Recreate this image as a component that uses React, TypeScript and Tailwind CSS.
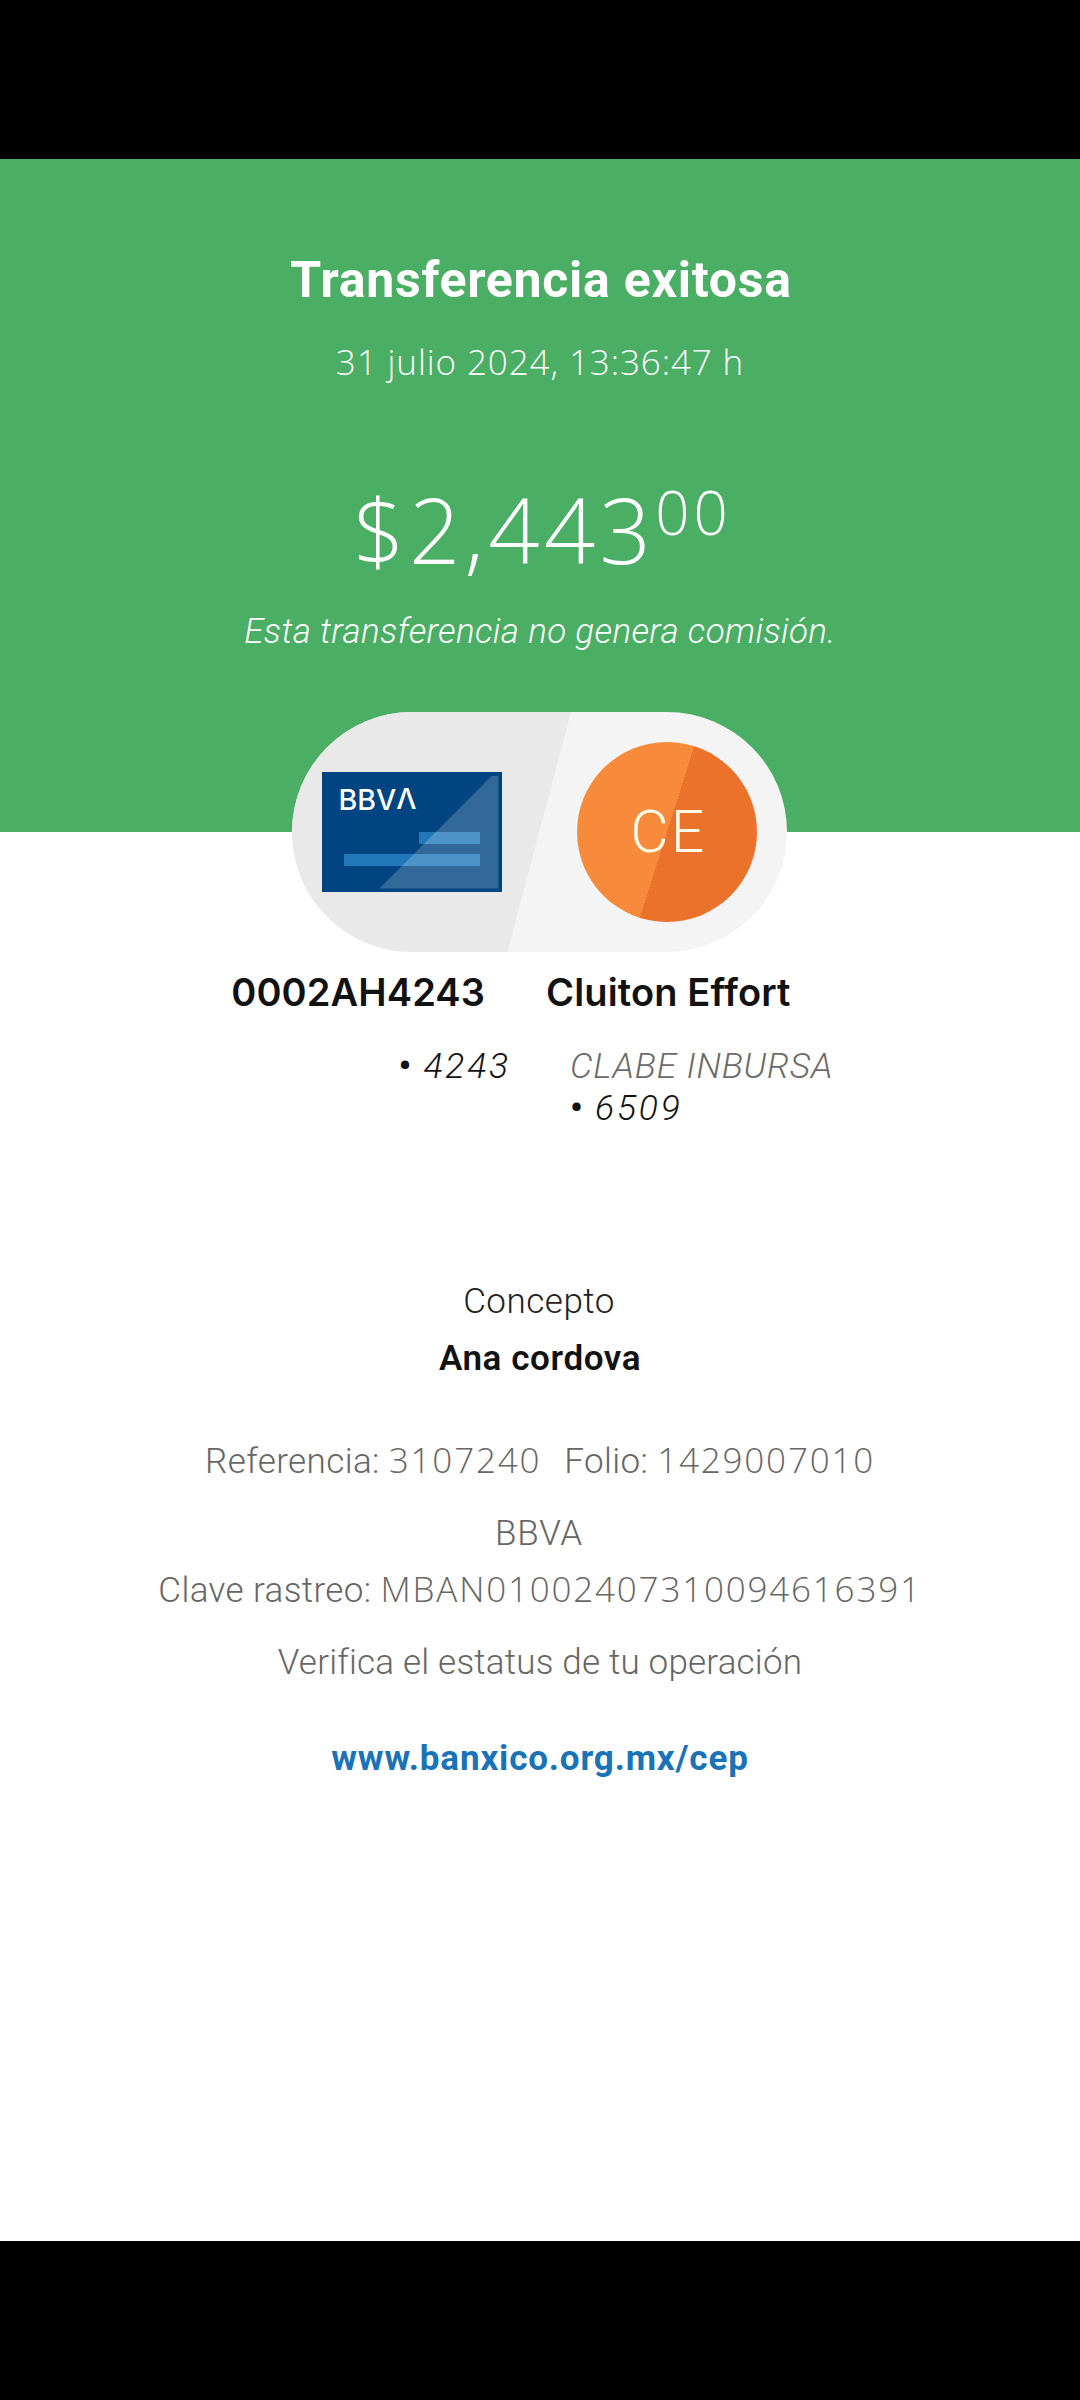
// Transfer receipt screen

function BankCard() {
  return (
    <svg width="180" height="120" viewBox="0 0 180 120" className="shrink-0">
      <rect width="180" height="120" fill="#004481" />
      <rect x="97" y="60" width="61" height="12" fill="#2179b9" />
      <rect x="22" y="82" width="136" height="12" fill="#2179b9" />
      <path d="M169.5 4H176.5V116.5H57.5Z" fill="#fff" fillOpacity="0.2" />
      <text
        x="16.5"
        y="38"
        textLength="78"
        lengthAdjust="spacingAndGlyphs"
        fill="#fff"
        className="font-['Inter',sans-serif] text-[28px] font-medium"
      >
        BBV<tspan dy="-1">Λ</tspan>
      </text>
    </svg>
  );
}

function Avatar({ initials }: { initials: string }) {
  return (
    <div className="flex h-[180px] w-[180px] shrink-0 items-center justify-center rounded-full bg-[linear-gradient(107.6deg,#f78b3b_50%,#eb722a_50%)] pl-[3px]">
      <span className="text-[59px] leading-[60px] font-light tracking-[2.2px] text-[#fffbe9]">{initials}</span>
    </div>
  );
}

export default function App() {
  return (
    <div className="flex h-[2400px] w-[1080px] flex-col bg-white font-['Roboto',sans-serif] text-[#121212]">
      <div className="h-[159px] shrink-0 bg-black" />

      {/* Header */}
      <header className="flex h-[673px] shrink-0 flex-col items-center bg-[#4aae64] pt-[91px] text-white">
        <h1 className="pl-0.5 text-[50px] leading-[60px] font-bold tracking-[0.75px]">Transferencia exitosa</h1>
        <p className="mt-[28px] font-['Open_Sans',sans-serif] text-[35px] leading-[48px] font-light tracking-[0.9px]">
          31 julio 2024, 13:36:47 h
        </p>
        <div className="mt-[93px] flex h-[100px] items-start pl-[5px] font-['Open_Sans',sans-serif] font-light">
          <span className="text-[90px] leading-[100px] tracking-[4.3px]">$2,443</span>
          <span className="mt-[3px] text-[60px] leading-[60px] tracking-[4px]">00</span>
        </div>
        <p className="mt-[28px] text-[35px] leading-[50px] font-light tracking-[0.35px] italic">
          Esta transferencia no genera comisión.
        </p>
      </header>

      {/* Origin and destination */}
      <div className="relative -mt-[120px] ml-[292px] flex h-[240px] w-[495px] shrink-0 items-center gap-[75px] overflow-hidden rounded-full bg-[#f4f4f4] pl-[30px]">
        <div className="absolute inset-0 bg-[#e9e9e9] [clip-path:polygon(0_0,279px_0,215.5px_100%,0_100%)]" />
        <div className="relative">
          <BankCard />
        </div>
        <div className="relative">
          <Avatar initials="CE" />
        </div>
      </div>

      <div className="mt-4 flex text-[35.5px] leading-[42px] font-light">
        <div className="w-[511px] text-right">
          <p className="pr-[26px] font-['Inter',sans-serif] text-[38px] leading-[48px] font-semibold tracking-[0.1px]">
            0002AH4243
          </p>
          <p className="mt-[29px] tracking-[2.8px]">
            <span className="font-bold">•</span> <span className="-ml-0.5 italic">4243</span>
          </p>
        </div>
        <div className="ml-[35px]">
          <p className="font-['Inter',sans-serif] text-[38px] leading-[48px] font-semibold tracking-[0.15px]">
            Cluiton Effort
          </p>
          <p className="mt-[29px] ml-6 tracking-[0.8px] text-[#6b6b6b] italic">CLABE INBURSA</p>
          <p className="ml-6 tracking-[2.8px]">
            <span className="font-bold">•</span> <span className="-ml-0.5 italic">6509</span>
          </p>
        </div>
      </div>

      {/* Details */}
      <div className="mt-[149px] flex flex-col items-center text-[35px] leading-[48px] font-light text-[#666]">
        <p className="pr-0.5 tracking-[0.5px] text-[#222]">Concepto</p>
        <p className="mt-[9px] font-semibold tracking-[0.6px] text-[#121212]">Ana cordova</p>
        <div className="mt-[55px] flex gap-[23px] tracking-[0.4px]">
          <p>
            Referencia: <span className="font-['Open_Sans',sans-serif] leading-none tracking-[1.8px]">3107240</span>
          </p>
          <p>
            Folio: <span className="font-['Open_Sans',sans-serif] leading-none tracking-[1.8px]">1429007010</span>
          </p>
        </div>
        <p className="mt-[24px] pr-0.5 tracking-[0.8px]">BBVA</p>
        <p className="mt-[9px] tracking-[0.4px]">
          Clave rastreo:{" "}
          <span className="font-['Open_Sans',sans-serif] leading-none tracking-[1.8px]">MBAN01002407310094616391</span>
        </p>
        <p className="mt-6 tracking-[0.2px]">Verifica el estatus de tu operación</p>
        <a href="#" className="mt-12 font-bold tracking-[0.85px] text-[#1973b8]">
          www.banxico.org.mx/cep
        </a>
      </div>

      <div className="mt-auto h-[159px] shrink-0 bg-black" />
    </div>
  );
}
